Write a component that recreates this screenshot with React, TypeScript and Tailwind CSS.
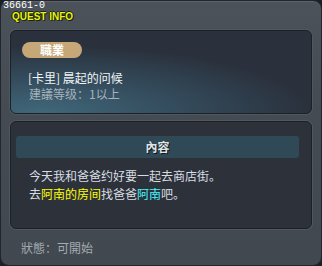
import React from "react";

const cjk = { fontFamily: '"Noto Sans CJK SC", "Noto Sans CJK TC", sans-serif' };

export default function App() {
  return (
    <div className="w-[322px] h-[266px] bg-[#1c1f24]">
      <div className="relative w-[322px] h-[266px] rounded-[9px] border border-[#23272d] bg-[linear-gradient(180deg,#4b5259_0%,#444b52_40%,#42484f_100%)] shadow-[inset_0_1px_0_#5d646b] flex flex-col px-[9px]">
        <span
          className="absolute left-[2px] top-[0px] text-[10px] leading-[10px] text-white"
          style={{ fontFamily: '"Liberation Mono", monospace' }}
        >
          36661-0
        </span>
        <div className="h-[29px] pt-[11px] pl-[2px]">
          <span
            className="block text-[10px] leading-[10px] font-bold text-[#e6f21e] [text-shadow:1px_1px_0_#1d2308,-1px_0_0_#1d2308,0_-1px_0_#1d2308,1px_0_0_#1d2308]"
            style={{ fontFamily: '"Liberation Sans", Arial, sans-serif' }}
          >
            QUEST INFO
          </span>
        </div>

        <div
          className="h-[84px] rounded-[6px] border border-[#1c2128] bg-[radial-gradient(ellipse_120%_110%_at_10%_100%,#40687a_0%,#344c5d_38%,#2a313c_75%)] shadow-[0_0_0_1px_#50575e] pl-[11px] pt-[11px]"
          style={cjk}
        >
          <div className="w-[60px] h-[16px] rounded-full bg-[#c6a778] flex items-center justify-center text-[12px] leading-[16px] font-bold text-white">
            職業
          </div>
          <div className="pl-[6px] mt-[12px] text-[12px] leading-[16px] text-[#f2f4f5]">[卡里] 晨起的问候</div>
          <div className="pl-[7px] text-[12px] leading-[16px] text-[#a6b2ba]">建議等级：1以上</div>
        </div>

        <div
          className="mt-[7px] h-[108px] rounded-[6px] border border-[#1c2128] bg-[#2c313a] shadow-[0_0_0_1px_#50575e] pl-[5px] pr-[12px] pt-[14px]"
          style={cjk}
        >
          <div className="h-[22px] rounded-[3px] bg-[#304957] flex items-center justify-center text-[12px] font-bold text-[#dfe6ea] [text-shadow:1px_1px_0_#111]">
            內容
          </div>
          <div className="pl-[13px] mt-[9px] text-[12px] leading-[18px] text-[#d7dde2]">
            <div>今天我和爸爸约好要一起去商店街。</div>
            <div>
              去<span className="text-[#ffff00]">阿南的房间</span>找爸爸<span className="text-[#44f6ff]">阿南</span>吧。
            </div>
          </div>
        </div>

        <div className="pl-[11px] mt-[11px] text-[12px] leading-[16px] text-[#a3abb3]" style={cjk}>
          狀態：可開始
        </div>
      </div>
    </div>
  );
}
